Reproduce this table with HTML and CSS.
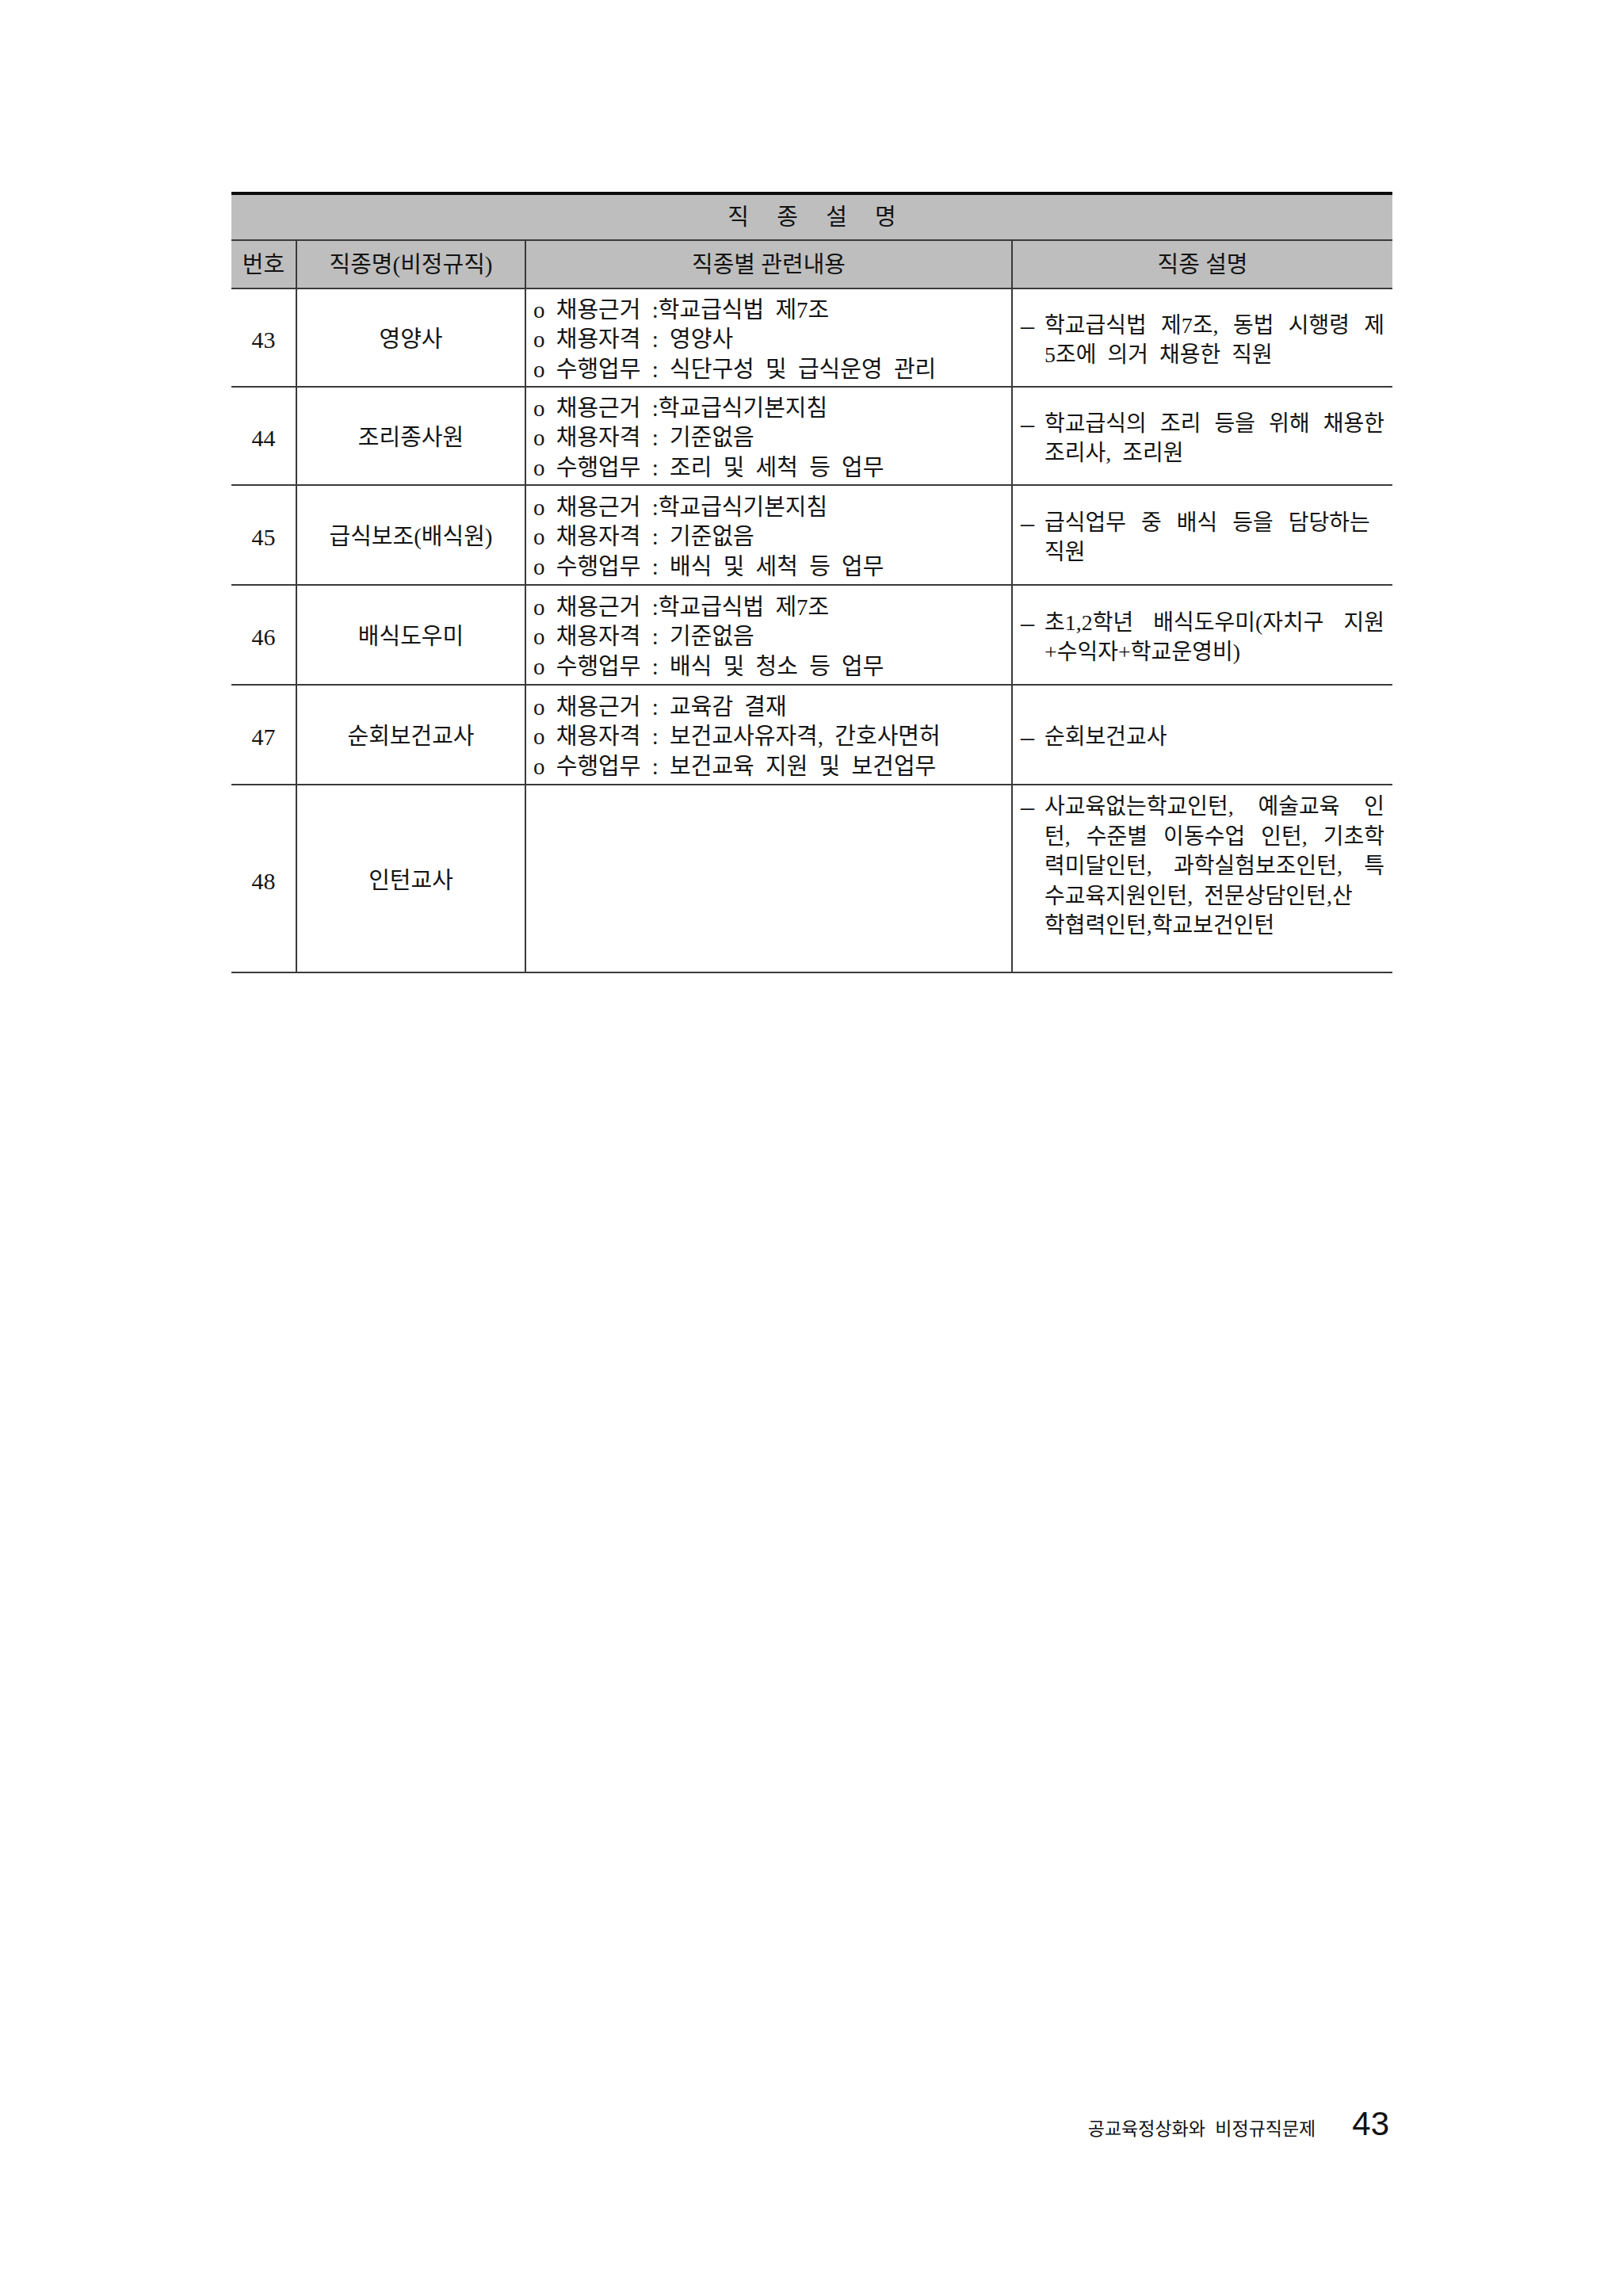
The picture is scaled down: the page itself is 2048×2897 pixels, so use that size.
FILE: index.html
```html
<!DOCTYPE html>
<html lang="ko">
<head>
<meta charset="utf-8">
<title>직종 설명</title>
<link rel="stylesheet" href="styles.css">
</head>
<body>
<div class="page">
  <table class="jobs">
    <colgroup>
      <col class="c-no">
      <col class="c-name">
      <col class="c-rel">
      <col class="c-desc">
    </colgroup>
    <thead>
      <tr class="r-title"><th colspan="4" class="title">직 종 설 명</th></tr>
      <tr class="r-head">
        <th class="first">번호</th>
        <th>직종명(비정규직)</th>
        <th>직종별 관련내용</th>
        <th>직종 설명</th>
      </tr>
    </thead>
    <tbody>
      <tr class="r-124">
        <td class="first no">43</td>
        <td class="name">영양사</td>
        <td class="rel">
          <div>o 채용근거 :학교급식법 제7조</div>
          <div>o 채용자격 : 영양사</div>
          <div>o 수행업무 : 식단구성 및 급식운영 관리</div>
        </td>
        <td class="desc">
          <div class="item"><span class="dash">–</span><div class="txt">
            <div class="ln full">학교급식법 제7조, 동법 시행령 제</div>
            <div class="ln">5조에 의거 채용한 직원</div>
          </div></div>
        </td>
      </tr>
      <tr class="r-124">
        <td class="first no">44</td>
        <td class="name">조리종사원</td>
        <td class="rel">
          <div>o 채용근거 :학교급식기본지침</div>
          <div>o 채용자격 : 기준없음</div>
          <div>o 수행업무 : 조리 및 세척 등 업무</div>
        </td>
        <td class="desc">
          <div class="item"><span class="dash">–</span><div class="txt">
            <div class="ln full">학교급식의 조리 등을 위해 채용한</div>
            <div class="ln">조리사, 조리원</div>
          </div></div>
        </td>
      </tr>
      <tr class="r-126">
        <td class="first no">45</td>
        <td class="name">급식보조(배식원)</td>
        <td class="rel">
          <div>o 채용근거 :학교급식기본지침</div>
          <div>o 채용자격 : 기준없음</div>
          <div>o 수행업무 : 배식 및 세척 등 업무</div>
        </td>
        <td class="desc">
          <div class="item"><span class="dash">–</span><div class="txt">
            <div class="ln wide">급식업무 중 배식 등을 담당하는</div>
            <div class="ln">직원</div>
          </div></div>
        </td>
      </tr>
      <tr class="r-126">
        <td class="first no">46</td>
        <td class="name">배식도우미</td>
        <td class="rel">
          <div>o 채용근거 :학교급식법 제7조</div>
          <div>o 채용자격 : 기준없음</div>
          <div>o 수행업무 : 배식 및 청소 등 업무</div>
        </td>
        <td class="desc">
          <div class="item"><span class="dash">–</span><div class="txt">
            <div class="ln full">초1,2학년 배식도우미(자치구 지원</div>
            <div class="ln">+수익자+학교운영비)</div>
          </div></div>
        </td>
      </tr>
      <tr class="r-126">
        <td class="first no">47</td>
        <td class="name">순회보건교사</td>
        <td class="rel">
          <div>o 채용근거 : 교육감 결재</div>
          <div>o 채용자격 : 보건교사유자격, 간호사면허</div>
          <div>o 수행업무 : 보건교육 지원 및 보건업무</div>
        </td>
        <td class="desc">
          <div class="item"><span class="dash">–</span><div class="txt">
            <div class="ln">순회보건교사</div>
          </div></div>
        </td>
      </tr>
      <tr class="r-237">
        <td class="first no">48</td>
        <td class="name">인턴교사</td>
        <td class="rel"></td>
        <td class="desc top">
          <div class="item"><span class="dash">–</span><div class="txt">
            <div class="ln full">사교육없는학교인턴, 예술교육 인</div>
            <div class="ln full">턴, 수준별 이동수업 인턴, 기초학</div>
            <div class="ln full">력미달인턴, 과학실험보조인턴, 특</div>
            <div class="ln">수교육지원인턴, 전문상담인턴,산</div>
            <div class="ln">학협력인턴,학교보건인턴</div>
          </div></div>
        </td>
      </tr>
    </tbody>
  </table>

  <div class="footer">
    <span class="ftitle">공교육정상화와 비정규직문제</span>
    <span class="pno">43</span>
  </div>
</div>
</body>
</html>
```

FILE: styles.css
```css
html, body {
  margin: 0;
  padding: 0;
  background: #ffffff;
}

body {
  font-family: "Liberation Serif", "Noto Sans CJK KR", serif;
  color: #141414;
}

.page {
  width: 1465px;
  padding: 242px 0 0 292px;
}

.jobs {
  width: 1465px;
  table-layout: fixed;
  border-collapse: separate;
  border-spacing: 0;
  font-size: 29px;
  line-height: 37.5px;
}

.c-no { width: 81px; }
.c-name { width: 289px; }
.c-rel { width: 614px; }
.c-desc { width: 481px; }

.jobs th,
.jobs td {
  box-sizing: border-box;
  padding: 0;
  border-bottom: 2px solid #3a3a3a;
  border-left: 2px solid #3a3a3a;
  vertical-align: middle;
  font-weight: 400;
}

.jobs th.first,
.jobs td.first,
.jobs th.title {
  border-left: none;
}

.jobs th {
  background: #bebebe;
  text-align: center;
}

.r-title { height: 62px; }
.jobs th.title {
  border-top: 4px solid #0c0c0c;
  letter-spacing: 14px;
  text-indent: 14px;
  padding-top: 2px;
}

.r-head { height: 61px; }
.r-head th { padding-top: 2px; }

.r-124 { height: 124px; }
.r-126 { height: 126px; }
.r-237 { height: 237px; }

.no {
  text-align: center;
  font-size: 30px;
  padding-top: 6px !important;
}

.name {
  text-align: center;
  padding-top: 6px !important;
}

.rel {
  padding: 6px 8px 0 9px !important;
  word-spacing: 7px;
  white-space: nowrap;
}

.desc {
  padding: 6px 10px 0 10px !important;
  font-size: 28px;
  word-spacing: 7px;
}

.desc.top {
  vertical-align: top;
  padding-top: 8px !important;
}

.item {
  display: flex;
  align-items: flex-start;
}

.dash {
  flex: none;
  width: 30px;
  font-size: 34px;
}

.txt {
  flex: 1;
  min-width: 0;
}

.ln {
  white-space: nowrap;
  text-align: left;
}

.ln.full {
  text-align: justify;
  text-align-last: justify;
  word-spacing: 0;
}

.ln.wide {
  word-spacing: 12px;
}

.footer {
  margin-top: 1431px;
  display: flex;
  justify-content: flex-end;
  align-items: baseline;
  gap: 46px;
  padding-right: 4px;
  font-family: "Liberation Sans", "Noto Sans CJK KR", sans-serif;
  color: #111;
}

.ftitle {
  font-size: 23px;
  word-spacing: 6px;
  line-height: 42px;
}

.pno {
  font-size: 42px;
  line-height: 42px;
}
```
